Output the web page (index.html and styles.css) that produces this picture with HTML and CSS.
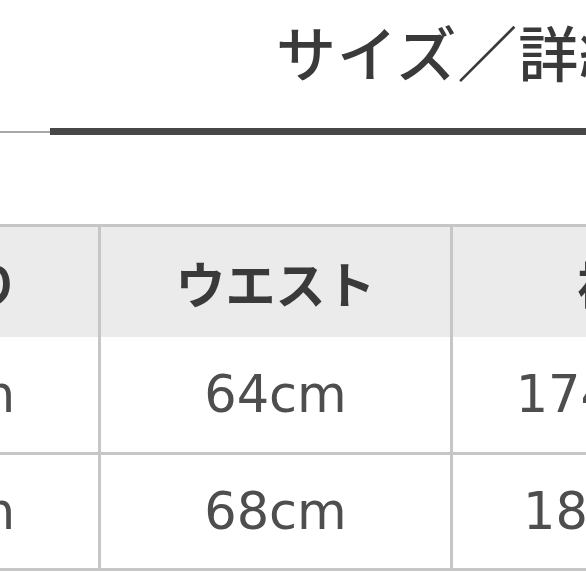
FILE: index.html
```html
<!DOCTYPE html>
<html lang="ja">
<head>
<meta charset="utf-8">
<title>サイズ／詳細</title>
<link rel="stylesheet" href="styles.css">
</head>
<body>
<div class="page">
  <h1 class="heading">サイズ／詳細</h1>
  <div class="rule">
    <div class="rule-thin"></div>
    <div class="rule-thick"></div>
  </div>
  <div class="table">
    <div class="row row-head">
      <div class="cell cell-first">胴回り</div>
      <div class="cell">ウエスト</div>
      <div class="cell">裾幅</div>
    </div>
    <div class="row row-body row-1">
      <div class="cell cell-first">64cm</div>
      <div class="cell">64cm</div>
      <div class="cell">174.5cm</div>
    </div>
    <div class="row row-body row-2">
      <div class="cell cell-first">68cm</div>
      <div class="cell">68cm</div>
      <div class="cell cell-narrow">182cm</div>
    </div>
  </div>
</div>
</body>
</html>
```

FILE: styles.css
```css
html, body {
  margin: 0;
  padding: 0;
  background: #ffffff;
}

.page {
  width: 586px;
  height: 586px;
  overflow: hidden;
}

.heading {
  margin: 0;
  padding: 18px 0 0 276px;
  font-family: "Noto Sans CJK JP", sans-serif;
  font-weight: 500;
  font-size: 60px;
  line-height: 66px;
  color: #3a3a3a;
  white-space: nowrap;
  letter-spacing: 1px;
}

.rule {
  display: flex;
  align-items: center;
  height: 7px;
  margin-top: 44px;
}

.rule-thin {
  width: 50px;
  height: 2px;
  background: #a8a8a8;
}

.rule-thick {
  flex: 1;
  height: 7px;
  background: #474747;
}

.table {
  margin-top: 89px;
  margin-left: -210px;
  width: 1120px;
  border-top: 3px solid #c6c6c6;
}

.row {
  display: flex;
}

.row-head {
  height: 110px;
  background: #ebebeb;
  font-family: "Noto Sans CJK JP", sans-serif;
  font-weight: 700;
  font-size: 50px;
  color: #3a3a3a;
}

.row-body {
  border-bottom: 3px solid #c6c6c6;
  font-family: "DejaVu Sans", sans-serif;
  font-size: 51px;
  color: #4e4e4e;
}

.row-1 {
  height: 115px;
}

.row-2 {
  height: 113px;
}

.cell {
  flex: none;
  width: 349px;
  display: flex;
  align-items: center;
  justify-content: center;
  white-space: nowrap;
}

.cell + .cell {
  border-left: 3px solid #c6c6c6;
}

.cell-first {
  width: 308px;
}

.cell-narrow {
  justify-content: flex-start;
  padding-left: 70px;
}
```
